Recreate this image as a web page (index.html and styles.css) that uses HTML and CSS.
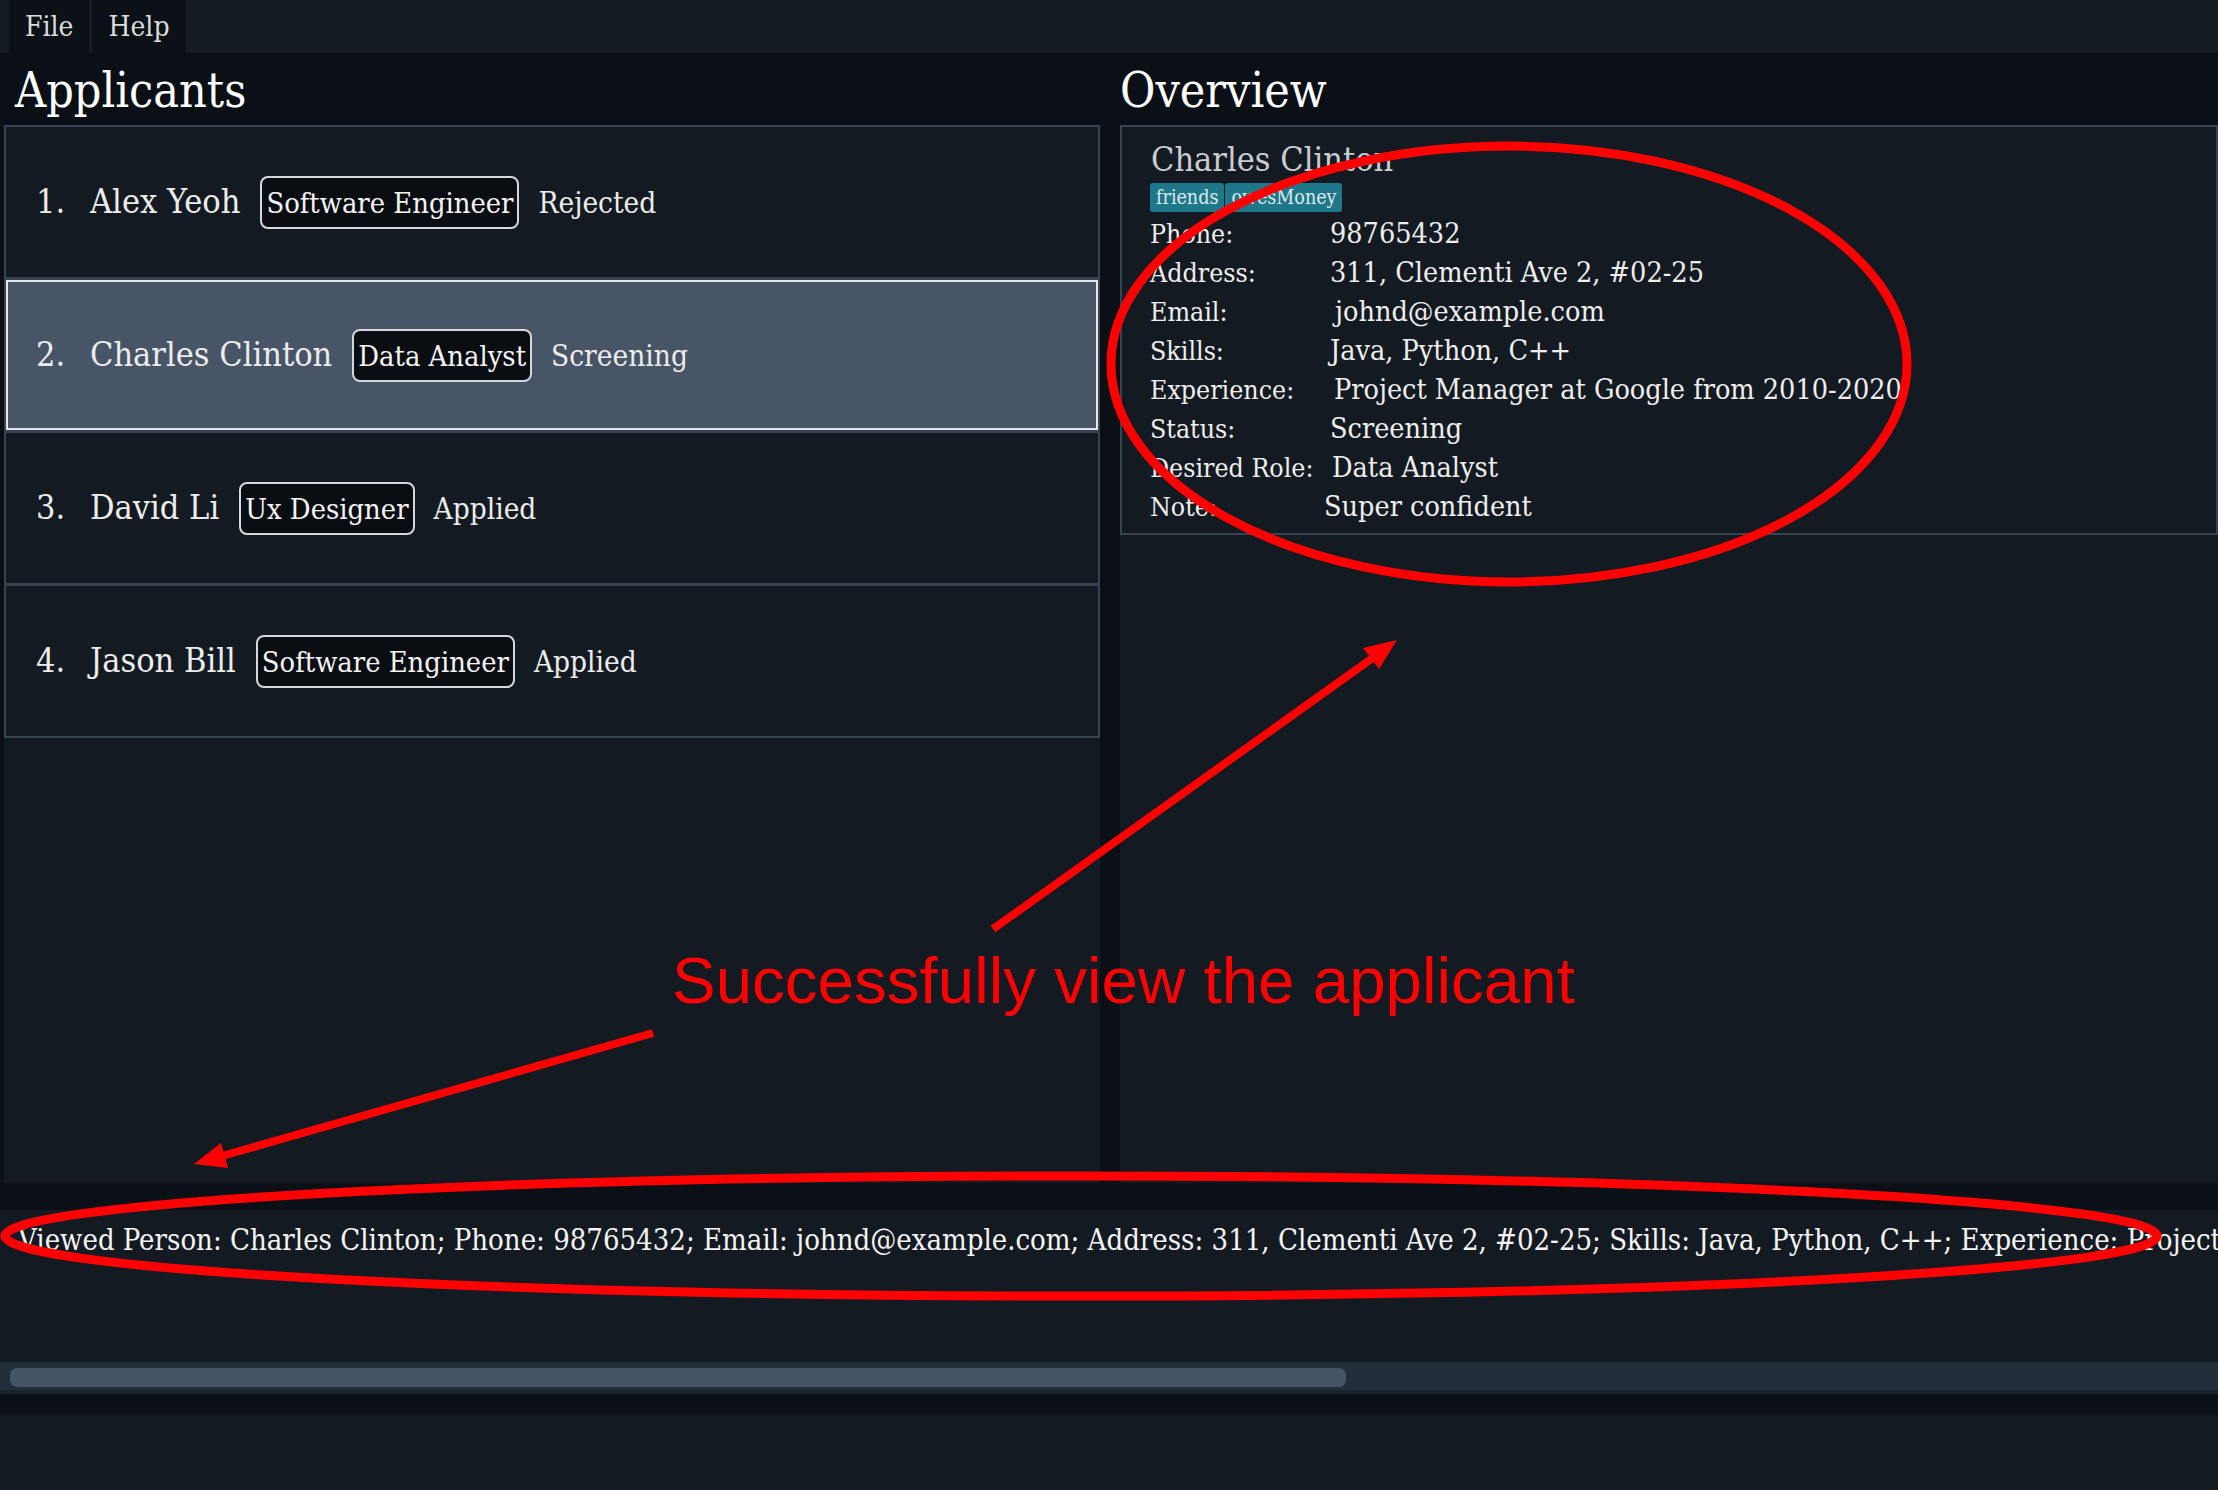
FILE: index.html
```html
<!DOCTYPE html>
<html lang="en">
<head>
<meta charset="utf-8">
<title>Applicants</title>
<link rel="stylesheet" href="styles.css">
</head>
<body>
<div class="app">
  <nav class="menubar">
    <div class="menu-item">File</div>
    <div class="menu-item">Help</div>
  </nav>

  <main class="main">
    <section class="pane pane-left">
      <h1 class="pane-title">Applicants</h1>
      <div class="list-panel">
        <ul class="list">
          <li class="row">
            <div class="row-line">
              <span class="num">1.</span>
              <span class="name">Alex Yeoh</span>
              <span class="role">Software Engineer</span>
              <span class="status">Rejected</span>
            </div>
          </li>
          <li class="row selected">
            <div class="row-line">
              <span class="num">2.</span>
              <span class="name">Charles Clinton</span>
              <span class="role">Data Analyst</span>
              <span class="status">Screening</span>
            </div>
          </li>
          <li class="row">
            <div class="row-line">
              <span class="num">3.</span>
              <span class="name">David Li</span>
              <span class="role">Ux Designer</span>
              <span class="status">Applied</span>
            </div>
          </li>
          <li class="row">
            <div class="row-line">
              <span class="num">4.</span>
              <span class="name">Jason Bill</span>
              <span class="role">Software Engineer</span>
              <span class="status">Applied</span>
            </div>
          </li>
        </ul>
      </div>
    </section>

    <section class="pane pane-right">
      <h1 class="pane-title">Overview</h1>
      <div class="overview-panel">
        <div class="card">
          <div class="card-name">Charles Clinton</div>
          <div class="tags">
            <span class="tag">friends</span>
            <span class="tag">owesMoney</span>
          </div>
          <dl class="details">
            <dt>Phone:</dt><dd>98765432</dd>
            <dt>Address:</dt><dd>311, Clementi Ave 2, #02-25</dd>
            <dt>Email:</dt><dd class="nudge-5">johnd@example.com</dd>
            <dt>Skills:</dt><dd>Java, Python, C++</dd>
            <dt>Experience:</dt><dd class="nudge-4">Project Manager at Google from 2010-2020</dd>
            <dt>Status:</dt><dd>Screening</dd>
            <dt>Desired Role:</dt><dd class="nudge-2">Data Analyst</dd>
            <dt>Note:</dt><dd class="nudge-m6">Super confident</dd>
          </dl>
        </div>
      </div>
    </section>
  </main>

  <section class="result">
    <div class="result-text">Viewed Person: Charles Clinton; Phone: 98765432; Email: johnd@example.com; Address: 311, Clementi Ave 2, #02-25; Skills: Java, Python, C++; Experience: Project Manager at Google from 2010-2020; Status: Screening; Desired Role: Data Analyst; Note: Super confident</div>
    <div class="hscroll"><div class="thumb"></div></div>
  </section>

  <footer class="statusbar"></footer>

  <svg class="annotations" width="2218" height="1490" viewBox="0 0 2218 1490" aria-hidden="true">
    <ellipse cx="1509" cy="364" rx="398" ry="218" fill="none" stroke="#ff0000" stroke-width="9"/>
    <ellipse cx="1081" cy="1236" rx="1076" ry="60" fill="none" stroke="#ff0000" stroke-width="9"/>
    <line x1="993" y1="929" x2="1374" y2="657" stroke="#ff0000" stroke-width="8"/>
    <polygon points="1397,640 1379,669 1363,648" fill="#ff0000"/>
    <line x1="653" y1="1033" x2="222" y2="1156" stroke="#ff0000" stroke-width="8"/>
    <polygon points="194,1164 221,1143 228,1168" fill="#ff0000"/>
  </svg>
  <div class="annotation-text">Successfully view the applicant</div>
</div>
</body>
</html>
```

FILE: styles.css
```css
* {
  box-sizing: border-box;
}

html, body {
  margin: 0;
  padding: 0;
}

body {
  width: 2218px;
  height: 1490px;
  overflow: hidden;
  background: #0b1017;
  color: #e6e6e6;
  font-family: "DejaVu Serif Condensed", "DejaVu Serif", serif;
  font-stretch: condensed;
}

.app {
  position: relative;
  width: 2218px;
  height: 1490px;
  display: flex;
  flex-direction: column;
}

/* ---------- menu bar ---------- */
.menubar {
  height: 53px;
  flex: none;
  display: flex;
  gap: 3px;
  padding-left: 9px;
  background: #151b22;
}

.menu-item {
  padding: 0 16px;
  line-height: 53px;
  font-size: 28px;
  color: #dcdcdc;
  background: #0c1117;
}

/* ---------- main panes ---------- */
.main {
  height: 1130px;
  flex: none;
  display: flex;
  gap: 20px;
}

.pane {
  display: flex;
  flex-direction: column;
}

.pane-left {
  width: 1100px;
  flex: none;
}

.pane-right {
  flex: 1;
}

.pane-title {
  margin: 0;
  height: 72px;
  padding-top: 3px;
  line-height: 69px;
  font-size: 48px;
  font-weight: normal;
  color: #ffffff;
}

.pane-left .pane-title {
  padding-left: 15px;
}

.pane-right .pane-title {
  padding-left: 0;
}

.list-panel {
  flex: 1;
  margin-left: 4px;
  background: #141a21;
}

.list {
  list-style: none;
  margin: 0;
  padding: 0;
  border: 2px solid #384352;
}

.row {
  height: 153px;
  display: flex;
  align-items: center;
  padding-left: 30px;
  background: #141a21;
  border-bottom: 3px solid #384352;
}

.row:last-child {
  height: 150px;
  border-bottom: none;
}

.row.selected {
  background: #475566;
  box-shadow: inset 0 0 0 2px #e3e7eb;
}

.row-line {
  display: flex;
  align-items: baseline;
}

.num {
  width: 54px;
  font-size: 34px;
  color: #ececec;
}

.name {
  font-size: 34px;
  color: #ececec;
  margin-right: 20px;
}

.role {
  font-size: 28.8px;
  line-height: 47px;
  padding: 2px 4px 0;
  border: 2px solid #d4d8dc;
  border-radius: 8px;
  background: #0a0e13;
  color: #f4f4f4;
  margin-right: 19px;
}

.status {
  font-size: 29.5px;
  color: #ececec;
}

/* ---------- overview ---------- */
.overview-panel {
  flex: 1;
  background: #141a21;
}

.card {
  border: 2px solid #384352;
  padding: 12px 28px 7px;
}

.card-name {
  font-size: 34px;
  line-height: 40px;
  color: #c9cdd1;
  padding-left: 1px;
}

.tags {
  display: flex;
  gap: 1px;
  margin-top: 4px;
}

.tag {
  font-size: 19.5px;
  line-height: 29px;
  padding: 0 6px;
  background: #1e788a;
  color: #dfe9ec;
  border-radius: 3px;
}

.details {
  margin: 2px 0 0;
  display: grid;
  grid-template-columns: 180px 1fr;
  align-items: baseline;
  font-size: 26.5px;
  line-height: 39px;
  color: #eeeeee;
}

.details dt,
.details dd {
  margin: 0;
}

.details dd {
  font-size: 28.5px;
}

.nudge-5 { padding-left: 5px; }
.nudge-4 { padding-left: 4px; }
.nudge-2 { padding-left: 2px; }
.nudge-m6 { margin-left: -6px !important; }

/* ---------- result display ---------- */
.result {
  margin-top: 27px;
  height: 184px;
  flex: none;
  display: flex;
  flex-direction: column;
  background: #141a21;
}

.result-text {
  flex: 1;
  padding: 10px 0 0 18px;
  font-size: 29px;
  line-height: 40px;
  color: #f4f4f4;
  white-space: nowrap;
  overflow: hidden;
}

.hscroll {
  height: 32px;
  padding-top: 6px;
  background: #222e3a;
  border-bottom: 4px solid #1a222b;
}

.thumb {
  margin-left: 10px;
  width: 1336px;
  height: 19px;
  border-radius: 7px;
  background: #465465;
}

/* ---------- status bar ---------- */
.statusbar {
  margin-top: 21px;
  flex: 1;
  background: #141a21;
}

/* ---------- annotations (drawn over the screenshot) ---------- */
.annotations {
  position: absolute;
  left: 0;
  top: 0;
  pointer-events: none;
}

.annotation-text {
  position: absolute;
  left: 672px;
  top: 948px;
  font-family: "Liberation Sans", Arial, sans-serif;
  font-size: 65.5px;
  line-height: 65px;
  color: #ff0000;
  white-space: nowrap;
  pointer-events: none;
}
```
